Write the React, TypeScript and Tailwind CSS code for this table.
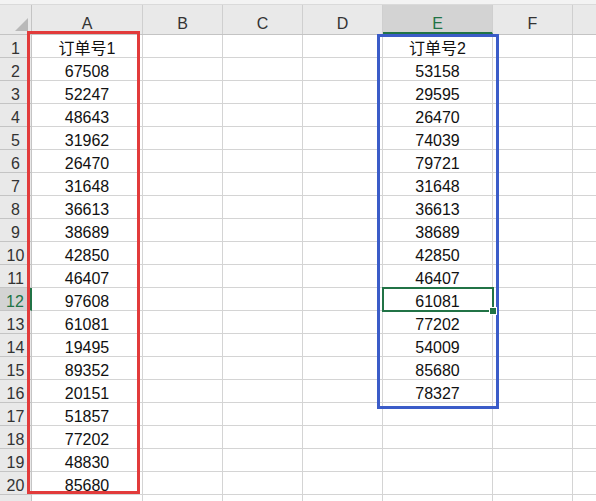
import React from 'react';

const colA = ['订单号1', '67508', '52247', '48643', '31962', '26470', '31648', '36613', '38689', '42850', '46407', '97608', '61081', '19495', '89352', '20151', '51857', '77202', '48830', '85680'];
const colE = ['订单号2', '53158', '29595', '26470', '74039', '79721', '31648', '36613', '38689', '42850', '46407', '61081', '77202', '54009', '85680', '78327'];

const columns = [
  { key: 'A', w: 'w-[111px]' },
  { key: 'B', w: 'w-[80px]' },
  { key: 'C', w: 'w-[80px]' },
  { key: 'D', w: 'w-[80px]' },
  { key: 'E', w: 'w-[110px]' },
  { key: 'F', w: 'w-[80px]' },
  { key: 'G', w: 'w-[80px]' },
];

const font = { fontFamily: '"Liberation Sans", "Noto Sans CJK SC", sans-serif' };

const App: React.FC = () => {
  const rows = Array.from({ length: 21 }, (_, i) => i + 1);

  const cellValue = (col: string, row: number) => {
    if (col === 'A') return colA[row - 1] ?? '';
    if (col === 'E') return colE[row - 1] ?? '';
    return '';
  };

  return (
    <div className="relative w-[596px] h-[501px] overflow-hidden bg-white text-[16px]" style={font}>
      {/* strip left of the formula bar */}
      <div className="h-[4px] bg-[#f3f3f3] border-b border-[#dadada] box-content" />

      {/* column headers */}
      <div className="flex h-[30px] bg-[#e9e9e9] border-b border-[#c4c4c4] box-border">
        <div className="relative w-[32px] shrink-0 border-r border-[#c4c4c4]">
          <svg className="absolute right-[3px] bottom-[3px]" width="13" height="13" viewBox="0 0 13 13">
            <polygon points="13,0 13,13 0,13" fill="#b9b9b9" />
          </svg>
        </div>
        {columns.map((c) => (
          <div
            key={c.key}
            className={`${c.w} shrink-0 text-center pt-[9px] leading-[20px] border-r border-[#cfcfcf] ${
              c.key === 'E' ? 'bg-[#d3d3d3] text-[#217346] border-b-2 border-b-[#217346]' : 'text-[#333]'
            }`}
          >
            {c.key === 'G' ? '' : c.key}
          </div>
        ))}
      </div>

      {/* grid rows */}
      {rows.map((r) => (
        <div key={r} className="flex h-[23px]">
          <div
            className={`w-[32px] shrink-0 text-center pt-[5px] leading-[18px] box-border border-b border-r ${
              r === 12
                ? 'bg-[#d3d3d3] text-[#217346] border-b-[#c4c4c4] border-r-2 border-r-[#217346]'
                : 'bg-[#e9e9e9] text-[#333] border-[#c4c4c4]'
            }`}
          >
            {r <= 20 ? r : ''}
          </div>
          {columns.map((c) => (
            <div
              key={c.key}
              className={`${c.w} shrink-0 box-border border-b border-r border-[#d4d4d4] text-center text-[#111] pt-[5px] leading-[18px] whitespace-nowrap`}
            >
              {cellValue(c.key, r)}
            </div>
          ))}
        </div>
      ))}

      {/* red outline around column A */}
      <div className="absolute left-[27px] top-[31px] w-[113px] h-[463px] border-[3px] border-[#e23b3b] pointer-events-none" />

      {/* blue outline around column E */}
      <div className="absolute left-[377px] top-[34px] w-[122px] h-[375px] border-[3px] border-[#3b5cc8] pointer-events-none" />

      {/* active cell E12 */}
      <div className="absolute left-[382px] top-[287px] w-[112px] h-[25px] border-2 border-[#217346] pointer-events-none" />
      <div className="absolute left-[490px] top-[308px] w-[6px] h-[6px] bg-[#217346] border border-white box-content -translate-x-[1px] -translate-y-[1px]" />
    </div>
  );
};

export default App;
